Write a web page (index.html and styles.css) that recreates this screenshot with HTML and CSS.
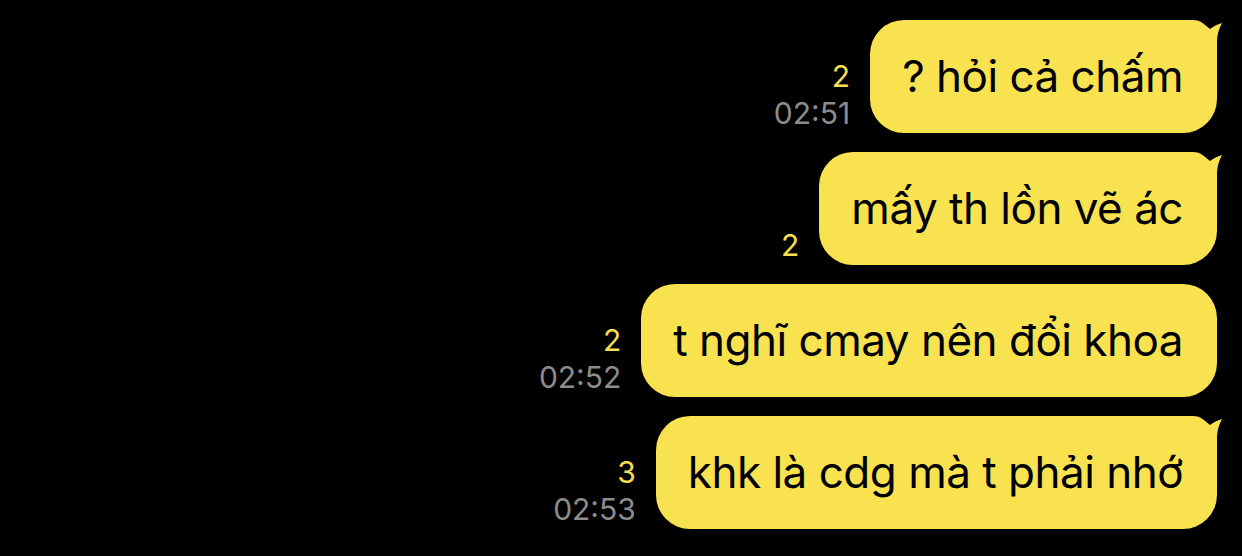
FILE: index.html
```html
<!DOCTYPE html>
<html lang="vi">
<head>
<meta charset="utf-8">
<title>Chat</title>
<link rel="stylesheet" href="styles.css">
</head>
<body>
<div class="chat">
  <div class="row">
    <div class="meta"><span class="unread">2</span><span class="time">02:51</span></div>
    <div class="bubble">? hỏi cả chấm<svg class="tail" viewBox="0 0 44 44" width="44" height="44"><path d="M0 0 L12 0 C20 0 24 5 29 9 C33 6 37 4 41 3 C38 9 36 14 36 24 L36 44 L0 44 Z"/></svg></div>
  </div>
  <div class="row">
    <div class="meta"><span class="unread">2</span></div>
    <div class="bubble">mấy th lồn vẽ ác<svg class="tail" viewBox="0 0 44 44" width="44" height="44"><path d="M0 0 L12 0 C20 0 24 5 29 9 C33 6 37 4 41 3 C38 9 36 14 36 24 L36 44 L0 44 Z"/></svg></div>
  </div>
  <div class="row">
    <div class="meta"><span class="unread">2</span><span class="time">02:52</span></div>
    <div class="bubble plain">t nghĩ cmay nên đổi khoa</div>
  </div>
  <div class="row">
    <div class="meta"><span class="unread">3</span><span class="time">02:53</span></div>
    <div class="bubble">khk là cdg mà t phải nhớ<svg class="tail" viewBox="0 0 44 44" width="44" height="44"><path d="M0 0 L12 0 C20 0 24 5 29 9 C33 6 37 4 41 3 C38 9 36 14 36 24 L36 44 L0 44 Z"/></svg></div>
  </div>
</div>
</body>
</html>
```
FILE: styles.css
```css
html, body {
  margin: 0;
  padding: 0;
  background: #000;
}
body {
  width: 1242px;
  height: 556px;
  overflow: hidden;
  font-family: Inter, "Noto Sans", "DejaVu Sans", sans-serif;
}
.chat {
  display: flex;
  flex-direction: column;
  gap: 19px;
  padding: 20px 25px 0 0;
}
.row {
  display: flex;
  justify-content: flex-end;
  align-items: flex-end;
  gap: 20px;
}
.meta {
  display: flex;
  flex-direction: column;
  align-items: flex-end;
  font-size: 30px;
  line-height: 37px;
  margin-bottom: 1px;
}
.unread {
  color: #f6df4f;
}
.time {
  color: #8c8c8c;
}
.bubble {
  position: relative;
  background: #f9e24f;
  color: #000;
  font-size: 44px;
  letter-spacing: -0.5px;
  line-height: 53px;
  padding: 30px 34px 30px 32px;
  border-radius: 34px;
  white-space: nowrap;
}
.tail {
  position: absolute;
  top: 0;
  right: -8px;
  fill: #f9e24f;
}
```
